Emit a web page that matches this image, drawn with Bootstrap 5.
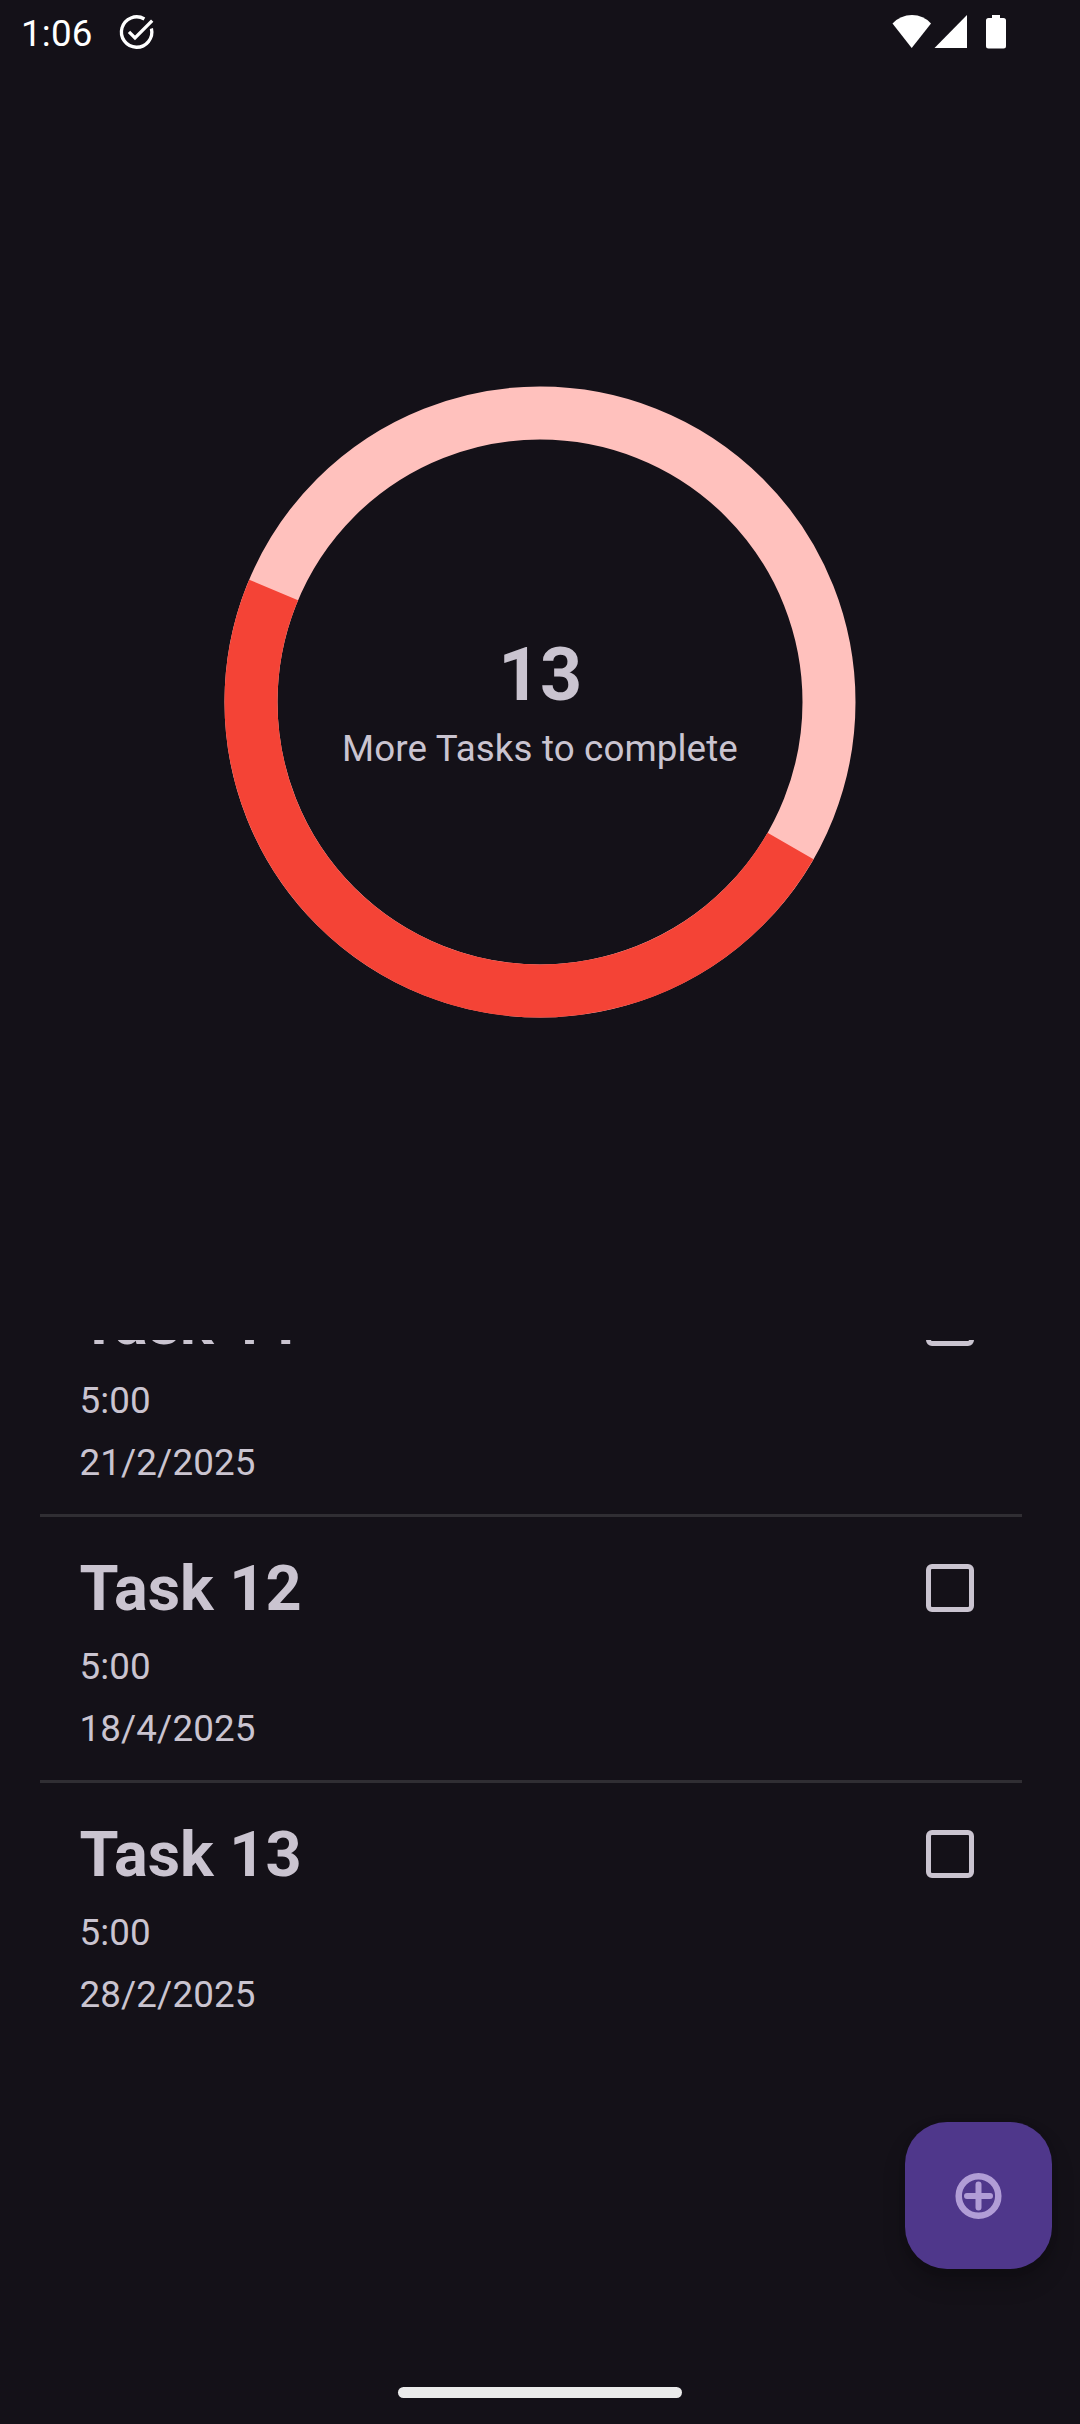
<!DOCTYPE html>
<html lang="en" data-bs-theme="dark">
<head>
<meta charset="utf-8">
<meta name="viewport" content="width=device-width, initial-scale=1">
<title>Tasks</title>
<link href="https://cdn.jsdelivr.net/npm/bootstrap@5.3.0/dist/css/bootstrap.min.css" rel="stylesheet">
<style>
  body { background: #141118; color: #cac4d0; font-family: Roboto, sans-serif; font-size: 36.75px; letter-spacing: .12px; }
  .screen { height: 2424px; }
  .status-bar { height: 66px; padding: 1px 73px 0 21px; color: #fff; letter-spacing: .2px; line-height: 64px; }
  .status-bar svg { display: block; margin-bottom: 3px; }
  .summary { height: 1274px; padding-top: 320px; }
  .ring { width: 632px; height: 632px; }
  .ring-label { padding-top: 7px; }
  .count { font-size: 73.5px; line-height: 86px; letter-spacing: -.3px; }
  .caption { line-height: 62px; }
  .task-list { height: 720px; padding: 0 58px 0 40px; }
  .scrolled { margin-top: -89px; }
  .task { height: 266px; padding: 28px 48px 18px 39.5px; border-bottom: 3px solid #302e33; }
  .task:last-child { border-color: transparent; }
  .task-title { font-size: 63px; line-height: 88px; margin-bottom: 3px; letter-spacing: 0; }
  .task-line { line-height: 62px; }
  .form-check-input.task-box { width: 48px; height: 48px; margin: 19px 0 0; border: 5.5px solid #cac4d0; border-radius: 6px; background: transparent; }
  .fab { right: 28px; bottom: 155px; width: 147px; height: 147px; border: 0; border-radius: 42px; background: #4f378b; box-shadow: 0 14px 22px rgba(0,0,0,.22), 0 2px 8px rgba(0,0,0,.06); }
  .gesture-bar { width: 284px; height: 11px; margin-bottom: 26px; background: #ebebeb; }
</style>
</head>
<body>
<div class="screen position-relative d-flex flex-column overflow-hidden">
  <header class="status-bar d-flex align-items-center justify-content-between flex-shrink-0">
    <div class="d-flex align-items-center">
      <span>1:06</span>
      <svg class="ms-4" width="38" height="38" viewBox="-.7 0 38 38" fill="none" stroke="#fff" stroke-width="3.3">
        <path d="M26.7 6A15.2 15.2 0 1 0 33.7 15.5"/><path d="M11.3 18.8l6 6.2L34.5 7.6"/>
      </svg>
    </div>
    <svg width="115" height="36" viewBox="0 0 115 36" fill="#fff">
      <path d="M0.5 9.5Q8.500 1 20 1T39 9.500L19.700 34z"/>
      <path d="M42.500 34L75 1V34z"/>
      <path d="M100 1h8v3h3.500a2.500 2.500 0 0 1 2.500 2.500V32a2.500 2.500 0 0 1-2.500 2.500h-15A2.500 2.500 0 0 1 94 32V6.500A2.500 2.500 0 0 1 96.500 4h3.500z"/>
    </svg>
  </header>

  <section class="summary flex-shrink-0">
    <div class="ring position-relative mx-auto">
      <svg class="d-block" width="632" height="632" viewBox="-316 -316 632 632" fill="none" stroke-width="53">
        <circle r="289" stroke="#ffc1bd"/>
        <circle r="289" stroke="#f44336" pathLength="360" stroke-dasharray="172.900 360" transform="rotate(29.900)"/>
      </svg>
      <div class="ring-label position-absolute top-0 start-0 w-100 h-100 d-flex flex-column align-items-center justify-content-center">
        <div class="count fw-bold">13</div>
        <div class="caption">More Tasks to complete</div>
      </div>
    </div>
  </section>

  <!-- Scrolled list: the first row is partly above the viewport -->
  <main class="task-list overflow-hidden flex-shrink-0">
    <div class="scrolled">
      <div class="task d-flex justify-content-between align-items-start">
        <div><div class="task-title fw-bold">Task 11</div><div class="task-line">5:00</div><div class="task-line">21/2/2025</div></div>
        <input class="form-check-input task-box" type="checkbox" aria-label="Task 11">
      </div>
      <div class="task d-flex justify-content-between align-items-start">
        <div><div class="task-title fw-bold">Task 12</div><div class="task-line">5:00</div><div class="task-line">18/4/2025</div></div>
        <input class="form-check-input task-box" type="checkbox" aria-label="Task 12">
      </div>
      <div class="task d-flex justify-content-between align-items-start">
        <div><div class="task-title fw-bold">Task 13</div><div class="task-line">5:00</div><div class="task-line">28/2/2025</div></div>
        <input class="form-check-input task-box" type="checkbox" aria-label="Task 13">
      </div>
    </div>
  </main>

  <button class="fab btn position-absolute d-flex align-items-center justify-content-center p-0" aria-label="Add task">
    <svg width="48" height="48" viewBox="-23.500 -24 48 48" fill="none" stroke="#b19dd6">
      <circle r="19.800" stroke-width="6.500"/>
      <path d="M-11.500 0H11.500M0 -11.500V11.500" stroke-width="6" stroke-linecap="round"/>
    </svg>
  </button>

  <div class="gesture-bar rounded-pill mx-auto mt-auto flex-shrink-0"></div>
</div>
<script src="https://cdn.jsdelivr.net/npm/bootstrap@5.3.0/dist/js/bootstrap.bundle.min.js"></script>
</body>
</html>
